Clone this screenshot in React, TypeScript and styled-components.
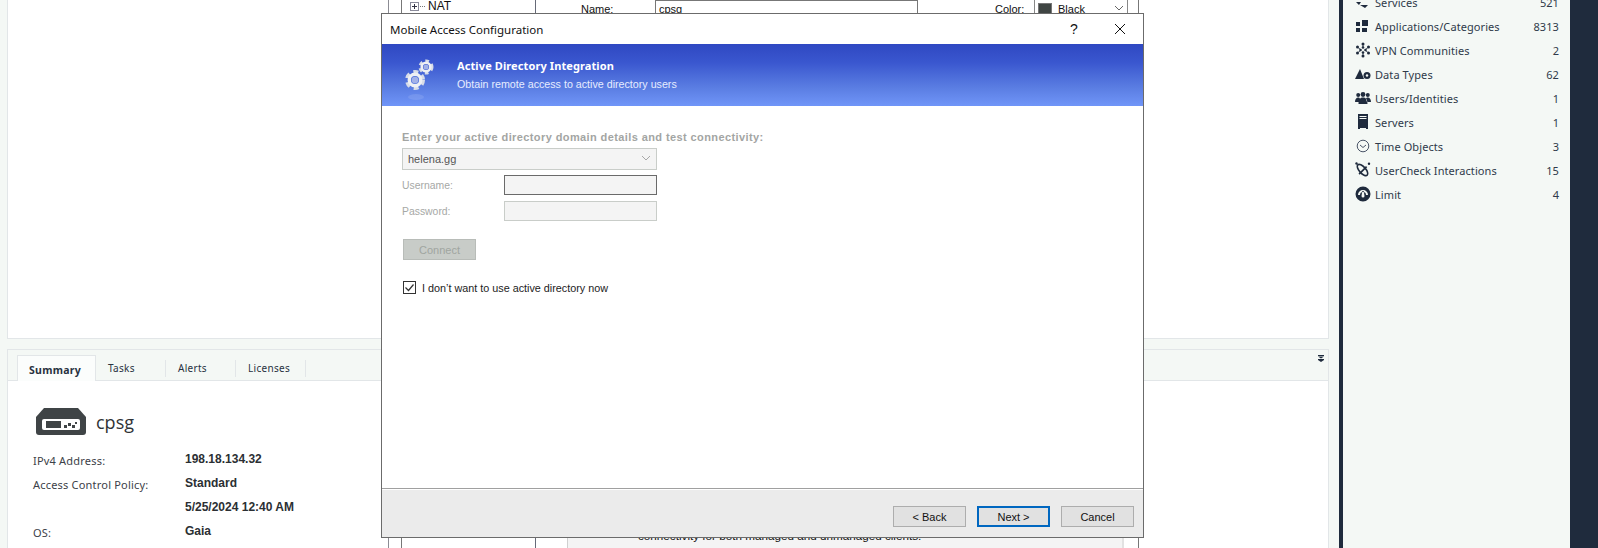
import React from 'react';
import styled, {createGlobalStyle} from 'styled-components';

const GlobalStyle = createGlobalStyle`
  html, body {
    margin: 0;
    padding: 0;
    background: #f4f8f5;
  }
  * {
    box-sizing: border-box;
  }
`;

const uiFont = `"Noto Sans", "Open Sans", sans-serif`;
const dialogFont = `"Liberation Sans", Arial, sans-serif`;

const Page = styled.div`
  position: relative;
  width: 1598px;
  height: 548px;
  overflow: hidden;
  display: flex;
  background: #f4f8f5;
  font-family: ${uiFont};
  color: #28323f;
`;
const MainColumn = styled.main`
  width: 1322px;
  margin-left: 7px;
  display: flex;
  flex-direction: column;
`;
const TopPanel = styled.section`
  height: 339px;
  background: #fff;
  border: 1px solid #e2e6e8;
  border-top: none;
`;
const DetailPanel = styled.section`
  flex: 1;
  margin-top: 10px;
  background: #fff;
  border: 1px solid #e2e6e8;
  border-bottom: none;
  display: flex;
  flex-direction: column;
`;
const TabBar = styled.div`
  height: 31px;
  background: #f4f8f5;
  border-bottom: 1px solid #e2e6e8;
  display: flex;
  align-items: flex-start;
  padding: 5px 4px 0 9px;
`;
const Tab = styled.div<{$active?: boolean}>`
  height: ${p => (p.$active ? '26px' : '17px')};
  margin-top: ${p => (p.$active ? '0' : '5px')};
  width: ${p => (p.$active ? '79px' : '70px')};
  display: flex;
  align-items: center;
  font-size: ${p => (p.$active ? '10.5px' : '10px')};
  letter-spacing: 0.3px;
  font-weight: ${p => (p.$active ? 700 : 400)};
  padding: ${p => (p.$active ? '2px 0 0 11px' : '0 0 2px 12px')};
  background: ${p => (p.$active ? '#fbfdfc' : 'transparent')};
  border: ${p => (p.$active ? '1px solid #e2e6e8' : 'none')};
  border-bottom: none;
  border-right: 1px solid #e2e6e8;
`;
const CollapseIcon = styled.svg`
  width: 6px;
  height: 7px;
  margin-left: auto;
  fill: #1f2b3d;
`;
const SummaryBody = styled.div`
  padding: 27px 0 0 25px;
`;
const DeviceTitle = styled.div`
  display: flex;
  align-items: center;
  gap: 10px;
  margin-left: 3px;
  height: 27px;
  font-family: "Open Sans", sans-serif;
  font-size: 18px;
  font-weight: 500;
  color: #2f3336;
`;
const SummaryGrid = styled.div`
  display: grid;
  grid-template-columns: 152px 1fr;
  grid-auto-rows: 24px;
  margin-top: 12px;
  align-items: center;
`;
const SummaryLabel = styled.div`
  font-size: 11px;
  letter-spacing: 0.2px;
  color: #3c4148;
  padding-top: 3px;
`;
const SummaryValue = styled.div`
  font-family: ${dialogFont};
  font-size: 12px;
  font-weight: 700;
  color: #2b2f33;
`;
const Gutter = styled.div`
  width: 10px;
`;
const Sidebar = styled.aside`
  width: 231px;
  border-left: 4px solid #1f2b3d;
  padding: 0 11px 0 0;
  background: #f4f8f5;
`;
const SidebarList = styled.ul`
  list-style: none;
  margin: -10px 0 0;
  padding: 0 0 0 12px;
`;
const SidebarRow = styled.li`
  height: 24px;
  display: flex;
  align-items: center;
  font-size: 11px;
  letter-spacing: 0.08px;
  color: #2f3a4a;
`;
const SidebarIcon = styled.svg`
  width: 16px;
  height: 16px;
  margin-right: 4px;
  flex: none;
  fill: #1f2b3d;
`;
const SidebarCount = styled.span`
  margin-left: auto;
`;
const DarkEdge = styled.div`
  flex: 1;
  background: #1f2b3d;
`;

/* the window that lies under the wizard */
const BackWindow = styled.div`
  position: absolute;
  left: 388px;
  top: 0;
  width: 751px;
  height: 548px;
  background: #fff;
  border-left: 1px solid #8c8c94;
  border-right: 1px solid #777;
  display: flex;
  font-family: ${dialogFont};
  font-size: 11px;
  color: #111;
`;
const TreeIndent = styled.div`
  width: 12px;
  flex: none;
  background: #fff;
`;
const TreePane = styled.div`
  width: 135px;
  flex: none;
  border-left: 1px solid #777;
  border-right: 1px solid #666a78;
  display: flex;
  align-items: flex-start;
  padding: 0 0 0 8px;
`;
const TreeToggle = styled.span`
  width: 9px;
  height: 9px;
  margin-top: 2px;
  border: 1px solid #8a8a9a;
  position: relative;
  &::before {
    content: '';
    position: absolute;
    left: 1px;
    top: 3px;
    width: 5px;
    height: 1px;
    background: #334;
  }
  &::after {
    content: '';
    position: absolute;
    left: 3px;
    top: 1px;
    width: 1px;
    height: 5px;
    background: #334;
  }
`;
const TreeDots = styled.span`
  width: 5px;
  margin: 6px 3px 0 1px;
  border-top: 1px dotted #777;
`;
const TreeLabel = styled.span`
  font-size: 12px;
  line-height: 13px;
`;
const FormPane = styled.div`
  flex: 1;
  display: flex;
  flex-direction: column;
  justify-content: space-between;
`;
const FormRow = styled.div`
  display: flex;
  height: 14px;
`;
const NameLabel = styled.span`
  margin: 3px 0 0 45px;
  width: 74px;
`;
const NameInput = styled.div`
  width: 263px;
  height: 16px;
  border: 1px solid #777;
  padding: 2px 0 0 3px;
`;
const ColorLabel = styled.span`
  margin: 3px 0 0 77px;
  width: 39px;
`;
const ColorSelect = styled.div`
  width: 94px;
  height: 16px;
  border: 1px solid #888;
  border-top: none;
  display: flex;
  padding: 3px 0 0 3px;
  gap: 6px;
`;
const ColorSwatch = styled.span`
  width: 14px;
  height: 14px;
  background: #3f4543;
  border: 1px solid #777;
`;
const SmallChevron = styled.svg`
  margin-left: auto;
  width: 14px;
  height: 10px;
  stroke: #666;
  fill: none;
`;
const DescriptionBox = styled.div`
  margin-left: 31px;
  width: 557px;
  height: 30px;
  background: #f4f4f4;
  border-left: 1px solid #d0d0d0;
  border-right: 2px solid #e2e2e2;
  padding: 11px 0 0 70px;
  white-space: nowrap;
  font-size: 11.7px;
`;

/* the wizard dialog */
const Dialog = styled.div`
  position: absolute;
  left: 381px;
  top: 13px;
  width: 763px;
  height: 525px;
  background: #fff;
  border: 1px solid #6b6b6b;
  display: flex;
  flex-direction: column;
  font-family: ${dialogFont};
  font-size: 11px;
  color: #111;
`;
const TitleBar = styled.div`
  height: 30px;
  flex: none;
  display: flex;
  align-items: center;
  padding: 0 0 0 8px;
`;
const TitleText = styled.span`
  flex: 1;
  font-family: "Noto Sans", sans-serif;
  font-size: 11.5px;
`;
const TitleButton = styled.span`
  width: 46px;
  height: 30px;
  display: flex;
  align-items: center;
  justify-content: center;
  font-size: 14px;
`;
const Banner = styled.div`
  height: 62px;
  flex: none;
  display: flex;
  align-items: center;
  background: linear-gradient(#2f48c2 0%, #3a57cf 30%, #5a7de2 70%, #7095f8 100%);
  color: #fff;
`;
const BannerIcon = styled.svg`
  width: 50px;
  height: 50px;
  margin: 2px 0 0 14px;
  flex: none;
`;
const BannerText = styled.div`
  margin-left: 11px;
  display: flex;
  flex-direction: column;
  gap: 5px;
  margin-top: -2px;
`;
const BannerTitle = styled.div`
  font-family: "Noto Sans", sans-serif;
  font-weight: 700;
  font-size: 11px;
  letter-spacing: 0.1px;
`;
const BannerSub = styled.div`
  font-size: 10.7px;
  color: #e6ecff;
`;
const WizardBody = styled.div`
  flex: 1;
  padding: 24px 0 0 20px;
  display: flex;
  flex-direction: column;
  align-items: flex-start;
`;
const Heading = styled.div`
  font-size: 11px;
  font-weight: 700;
  letter-spacing: 0.4px;
  color: #a3a5a3;
  line-height: 14px;
  margin-bottom: 4px;
`;
const DomainSelect = styled.div`
  width: 255px;
  height: 22px;
  background: #f4f4f4;
  border: 1px solid #c9cdc9;
  display: flex;
  align-items: center;
  padding-left: 5px;
  color: #555;
`;
const Chevron = styled.svg`
  margin-left: auto;
  width: 18px;
  height: 10px;
  stroke: #a8a8a8;
  fill: none;
`;
const FieldRow = styled.div`
  display: flex;
  align-items: center;
  width: 255px;
  margin-top: 5px;
  height: 20px;
  color: #a6a8a6;
  font-size: 10.4px;
  & + & {
    margin-top: 6px;
  }
`;
const FieldLabel = styled.span`
  width: 102px;
`;
const FieldInput = styled.div<{$focused?: boolean}>`
  width: 153px;
  height: 20px;
  background: #f4f4f4;
  border: 1px solid ${p => (p.$focused ? '#6a6a6a' : '#c9cdc9')};
`;
const ConnectButton = styled.div`
  width: 73px;
  height: 21px;
  margin: 18px 0 0 1px;
  background: #c8ccc8;
  border: 1px solid #b8bcb8;
  color: #a0a5a0;
  display: flex;
  align-items: center;
  justify-content: center;
`;
const CheckRow = styled.div`
  display: flex;
  align-items: center;
  gap: 6px;
  margin: 21px 0 0 1px;
  color: #222;
  font-size: 10.8px;
`;
const CheckBox = styled.svg`
  width: 13px;
  height: 13px;
  flex: none;
`;
const Footer = styled.div`
  height: 49px;
  flex: none;
  background: #ebebeb;
  border-top: 1px solid #a0a0a0;
  box-shadow: inset 0 1px 0 #fff;
  display: flex;
  justify-content: flex-end;
  align-items: flex-end;
  gap: 11px;
  padding: 0 9px 10px 0;
`;
const WizardButton = styled.div<{$primary?: boolean}>`
  width: 73px;
  height: 21px;
  background: #e1e1e1;
  border: ${p => (p.$primary ? '2px solid #0067c0' : '1px solid #adadad')};
  display: flex;
  align-items: center;
  justify-content: center;
`;

const Gear: React.FC<{cx: number, cy: number, r: number}> = ({cx, cy, r}) => (
  <g>
    <circle cx={cx} cy={cy} r={r} fill="none" stroke="#d8dde8" strokeWidth={r * 0.5}
      strokeDasharray={`${r * 0.6} ${r * 0.52}`}/>
    <circle cx={cx} cy={cy} r={r * 0.72} fill="none" stroke="#eef0f4" strokeWidth={r * 0.42}/>
    <circle cx={cx} cy={cy} r={r * 0.42} fill="#a3b2e8"/>
  </g>
);

const icons: {[name: string]: React.ReactNode} = {
  services: <path d="M1 4h9l2-2 3 3H1zM15 8H6l-2 3-3-3zM5 11h8l-3 3z"/>,
  apps: <path d="M1 4h4v4H1zM7 2h6v6H7zM1 10h4v4H1zM7 10h5v4H7z"/>,
  vpn: <g>
    <circle cx="8" cy="2" r="1.500"/><circle cx="8" cy="14" r="1.500"/>
    <circle cx="2.500" cy="5" r="1.500"/><circle cx="13.500" cy="5" r="1.500"/>
    <circle cx="2.500" cy="11" r="1.500"/><circle cx="13.500" cy="11" r="1.500"/>
    <circle cx="8" cy="5.500" r="1.300"/><circle cx="8" cy="10.500" r="1.300"/>
    <circle cx="5.500" cy="8" r="1.300"/><circle cx="10.500" cy="8" r="1.300"/>
    <path d="M7.600 3h.8v2h-.8zM7.600 11h.8v2h-.8zM3.500 5.500l2 1.500-.4.600-2-1.500zM12.500 5.500l-2 1.500.4.600 2-1.500zM3.500 10.500l2-1.500-.4-.6-2 1.500zM12.500 10.500l-2-1.500.4-.6 2 1.500z"/>
  </g>,
  data: <g>
    <path d="M0 13L5 3l4 10z"/>
    <circle cx="12" cy="9.500" r="3.500"/><circle cx="12" cy="9.500" r="1.200" fill="#f4f8f5"/>
  </g>,
  users: <g>
    <circle cx="3.200" cy="5" r="2"/><circle cx="12.800" cy="5" r="2"/><circle cx="8" cy="4.500" r="2.400"/>
    <path d="M0 12c0-3 1.500-4.500 3-4.500S5 8 5 9.500L4 12zM16 12c0-3-1.500-4.500-3-4.500S11 8 11 9.500l1 2.500zM3.500 14c0-5 2-6.500 4.500-6.500s4.500 1.500 4.500 6.500z"/>
  </g>,
  servers: <path fillRule="evenodd" d="M3 0h10v15h-2v-1H5v1H3zM4.500 2v1h7V2zM4.500 4v1h7V4z"/>,
  time: <g fill="none" stroke="#4a5568" strokeWidth="1">
    <circle cx="8" cy="8" r="5.800"/><path d="M5 7l3 2.500 3-2.500"/>
  </g>,
  usercheck: <g>
    <ellipse cx="7.500" cy="8" rx="7" ry="3.200" transform="rotate(48 7.500 8)" fill="none" stroke="#1f2b3d" strokeWidth="1.600"/>
    <path d="M3.500 11.500l7.500-7.500 1.200 1.200-7.500 7.500z"/>
    <circle cx="14" cy="1.800" r="1.200"/><circle cx="1.500" cy="1.500" r="1.200"/>
  </g>,
  limit: <path fillRule="evenodd" d="M8 .5a7.500 7.500 0 1 0 0 15 7.500 7.500 0 0 0 0-15zM7.300 5h1.400l.8 5a1.500 1.500 0 0 1-3 0zM3 9a5 5 0 0 1 10 0h-2a3 3 0 0 0-6 0z"/>,
};

const rows = [
  {icon: 'services', name: 'Services', count: 521},
  {icon: 'apps', name: 'Applications/Categories', count: 8313},
  {icon: 'vpn', name: 'VPN Communities', count: 2},
  {icon: 'data', name: 'Data Types', count: 62},
  {icon: 'users', name: 'Users/Identities', count: 1},
  {icon: 'servers', name: 'Servers', count: 1},
  {icon: 'time', name: 'Time Objects', count: 3},
  {icon: 'usercheck', name: 'UserCheck Interactions', count: 15},
  {icon: 'limit', name: 'Limit', count: 4},
];

const App: React.FC = () => (
  <Page>
    <GlobalStyle/>
    <MainColumn>
      <TopPanel/>
      <DetailPanel>
        <TabBar>
          <Tab $active>Summary</Tab>
          <Tab>Tasks</Tab>
          <Tab>Alerts</Tab>
          <Tab>Licenses</Tab>
          <CollapseIcon viewBox="0 0 6 7">
            <path d="M0 0h6v1H0zM0 1.500h6L3 3.500zM0 4h6v1H0zM0 5h6L3 7z"/>
          </CollapseIcon>
        </TabBar>
        <SummaryBody>
          <DeviceTitle>
            <svg width="50" height="27" viewBox="0 0 50 27">
              <path d="M8 0h34l8 9v15a3 3 0 0 1-3 3H3a3 3 0 0 1-3-3V9z" fill="#3f4446"/>
              <rect x="6" y="11" width="38" height="11" rx="2" fill="#fff"/>
              <rect x="10" y="13" width="15" height="7" fill="#3f4446"/>
              <path d="M28 17h3v3h-3zM32 15h3v3h-3zM36 17h3v3h-3zM39 14h2v2h-2z" fill="#3f4446"/>
            </svg>
            cpsg
          </DeviceTitle>
          <SummaryGrid>
            <SummaryLabel>IPv4 Address:</SummaryLabel>
            <SummaryValue>198.18.134.32</SummaryValue>
            <SummaryLabel>Access Control Policy:</SummaryLabel>
            <SummaryValue>Standard</SummaryValue>
            <SummaryLabel/>
            <SummaryValue>5/25/2024 12:40 AM</SummaryValue>
            <SummaryLabel>OS:</SummaryLabel>
            <SummaryValue>Gaia</SummaryValue>
          </SummaryGrid>
        </SummaryBody>
      </DetailPanel>
    </MainColumn>
    <Gutter/>
    <Sidebar>
      <SidebarList>
        {rows.map(row => (
          <SidebarRow key={row.name}>
            <SidebarIcon viewBox="0 0 16 16">{icons[row.icon]}</SidebarIcon>
            {row.name}
            <SidebarCount>{row.count}</SidebarCount>
          </SidebarRow>
        ))}
      </SidebarList>
    </Sidebar>
    <DarkEdge/>

    <BackWindow>
      <TreeIndent/>
      <TreePane>
        <TreeToggle/>
        <TreeDots/>
        <TreeLabel>NAT</TreeLabel>
      </TreePane>
      <FormPane>
        <FormRow>
          <NameLabel>Name:</NameLabel>
          <NameInput>cpsg</NameInput>
          <ColorLabel>Color:</ColorLabel>
          <ColorSelect>
            <ColorSwatch/>
            <span>Black</span>
            <SmallChevron viewBox="0 0 14 10"><path d="M2 3l4 4 4-4"/></SmallChevron>
          </ColorSelect>
        </FormRow>
        <DescriptionBox>connectivity for both managed and unmanaged clients.</DescriptionBox>
      </FormPane>
    </BackWindow>

    <Dialog>
      <TitleBar>
        <TitleText>Mobile Access Configuration</TitleText>
        <TitleButton>?</TitleButton>
        <TitleButton>
          <svg width="12" height="12" viewBox="0 0 12 12" stroke="#111" fill="none">
            <path d="M1 1l10 10M11 1L1 11"/>
          </svg>
        </TitleButton>
      </TitleBar>
      <Banner>
        <BannerIcon viewBox="0 0 50 50">
          <ellipse cx="20" cy="46" rx="8" ry="3" fill="#a9bcf2" opacity="0.25"/>
          <Gear cx={30} cy={16} r={6}/>
          <Gear cx={19} cy={29} r={8}/>
        </BannerIcon>
        <BannerText>
          <BannerTitle>Active Directory Integration</BannerTitle>
          <BannerSub>Obtain remote access to active directory users</BannerSub>
        </BannerText>
      </Banner>
      <WizardBody>
        <Heading>Enter your active directory domain details and test connectivity:</Heading>
        <DomainSelect>
          helena.gg
          <Chevron viewBox="0 0 18 10"><path d="M4 2l4 4 4-4"/></Chevron>
        </DomainSelect>
        <FieldRow>
          <FieldLabel>Username:</FieldLabel>
          <FieldInput $focused/>
        </FieldRow>
        <FieldRow>
          <FieldLabel>Password:</FieldLabel>
          <FieldInput/>
        </FieldRow>
        <ConnectButton>Connect</ConnectButton>
        <CheckRow>
          <CheckBox viewBox="0 0 13 13">
            <rect x="0.500" y="0.500" width="12" height="12" fill="#fff" stroke="#333"/>
            <path d="M2.500 6.500l3 3 5-6" fill="none" stroke="#333" strokeWidth="1.200"/>
          </CheckBox>
          I don’t want to use active directory now
        </CheckRow>
      </WizardBody>
      <Footer>
        <WizardButton>&lt; Back</WizardButton>
        <WizardButton $primary>Next &gt;</WizardButton>
        <WizardButton>Cancel</WizardButton>
      </Footer>
    </Dialog>
  </Page>
);

export default App;
